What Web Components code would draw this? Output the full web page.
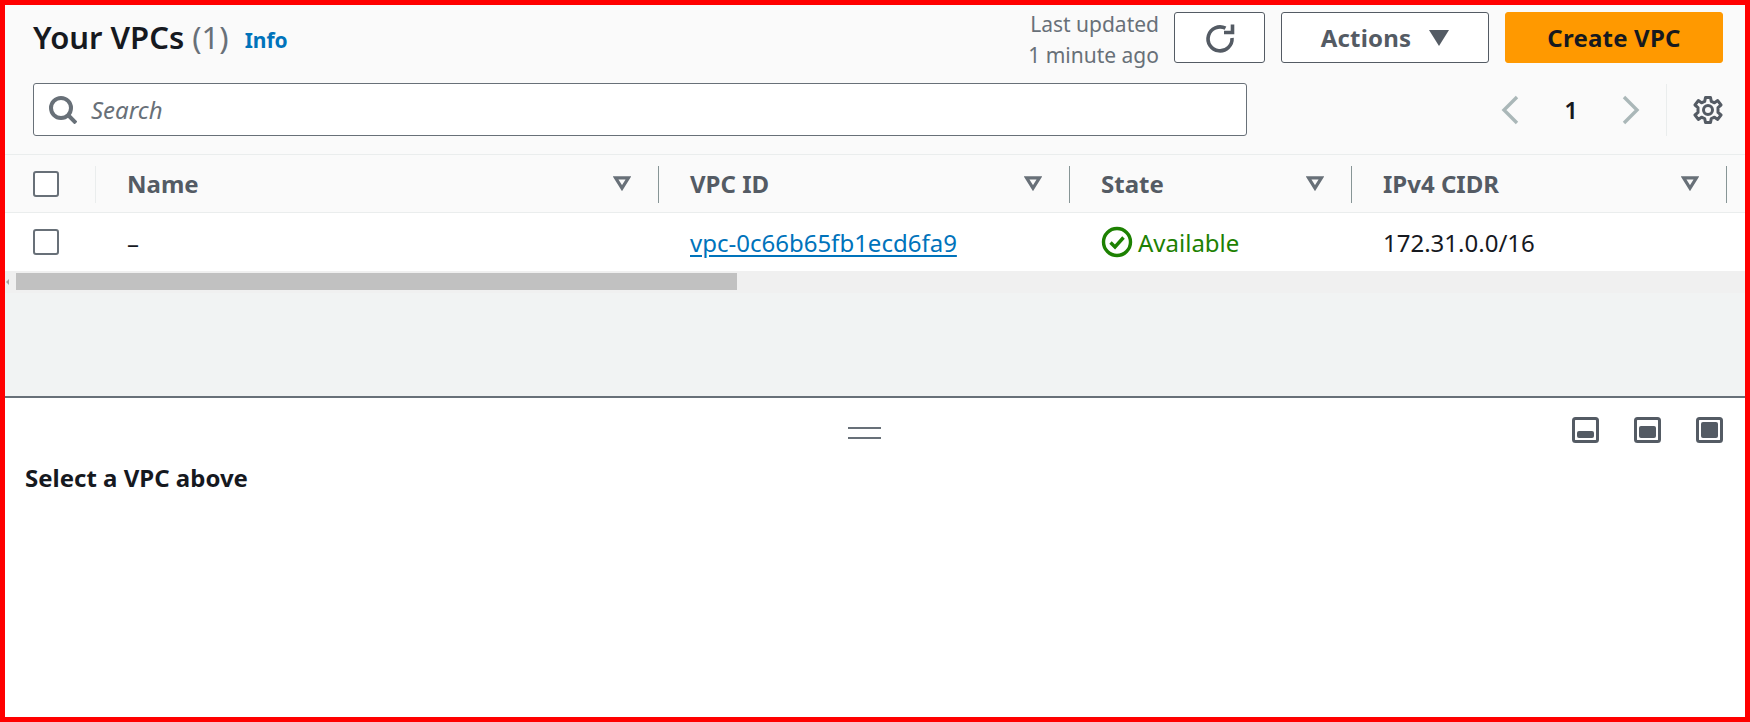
<!DOCTYPE html>
<html lang="en">
<head>
<meta charset="utf-8">
<title>Your VPCs</title>
<style>
  html, body { margin: 0; padding: 0; background: #fff; }
  body { font-family: "Noto Sans", "Open Sans", sans-serif; color: #16191f; }
</style>
</head>
<body>
<vpc-console>
  <vpc-header></vpc-header>
  <vpc-table></vpc-table>
  <vpc-split-panel>Select a VPC above</vpc-split-panel>
</vpc-console>

<script>
class VpcConsole extends HTMLElement {
    constructor() {
        super();
        this.attachShadow({ mode: 'open' });
    }

    connectedCallback() {
        this.shadowRoot.innerHTML = `
            <style>
                :host { display: block; box-sizing: border-box; width: 1750px; height: 722px; border: 5px solid #f00; background: #fff; overflow: hidden; }
                .page { display: flex; flex-direction: column; height: 100%; }
                .gap { height: 103px; background: #f1f3f3; border-bottom: 2px solid #687078; flex: none; }
            </style>
            <div class="page">
                <slot name="none"></slot>
                <slot></slot>
            </div>
        `;
    }
}

class VpcButton extends HTMLElement {
    constructor() {
        super();
        this.attachShadow({ mode: 'open' });
    }

    connectedCallback() {
        this.shadowRoot.innerHTML = `
            <style>
                :host { display: block; }
                button {
                    box-sizing: border-box; height: 51px; width: var(--w, auto); padding: 0;
                    display: flex; align-items: center; justify-content: center; gap: var(--gap, 0);
                    background: #fff; color: #545b64; border: 1px solid #545b64; border-radius: 3px;
                    font: 700 24px/1 "Noto Sans", sans-serif; letter-spacing: 0.2px;
                }
                :host([primary]) button { background: #f90; border-color: #f90; color: #16191f; }
            </style>
            <button type="button"><slot></slot></button>
        `;
    }
}

class VpcHeader extends HTMLElement {
    constructor() {
        super();
        this.attachShadow({ mode: 'open' });
    }

    connectedCallback() {
        this.shadowRoot.innerHTML = `
            <style>
                :host { display: block; box-sizing: border-box; height: 150px; background: #fafafa; border-bottom: 1px solid #eaeded; padding: 7px 22px 0 28px; font-family: "Noto Sans", sans-serif; }
                .top { display: flex; align-items: center; height: 51px; }
                h1 { margin: 0; font-size: 31px; line-height: 51px; font-weight: 600; color: #16191f; white-space: nowrap; }
                h1 span { font-weight: 400; color: #687078; }
                .info { margin-left: 16px; font-size: 21px; font-weight: 700; color: #0073bb; padding-top: 4px; }
                .updated { margin-left: auto; text-align: right; color: #687078; font-size: 21px; line-height: 31px; margin-right: 15px; margin-top: 4px; white-space: nowrap; }
                .actions { display: flex; gap: 16px; align-items: center; }
                .actions svg { display: block; }
                .second { display: flex; align-items: center; margin-top: 20px; height: 53px; }
                .search { box-sizing: border-box; width: 1214px; height: 53px; display: flex; align-items: center; gap: 14px; background: #fff; border: 1px solid #687078; border-radius: 3px; padding-left: 15px; }
                .search span { font-size: 24px; font-style: italic; color: #687078; }
                .pager { margin-left: auto; display: flex; align-items: center; height: 53px; }
                .pager .num { width: 16px; margin: 0 43px 0 44px; text-align: center; font-size: 24px; font-weight: 600; color: #16191f; }
                .pager .div { width: 1px; height: 52px; background: #eaeded; margin: 0 26px 0 26px; }
            </style>
            <div class="top">
                <h1>Your VPCs <span>(1)</span></h1>
                <a class="info">Info</a>
                <div class="updated">Last updated<br>1 minute ago</div>
                <div class="actions">
                    <vpc-button style="--w:91px">
                        <svg width="32" height="32" viewBox="0 0 32 32" fill="none" stroke="#545b64" stroke-width="3.6">
                            <path d="M21.5 6.2A12 12 0 1 0 28 16"/>
                            <path d="M28.5 2.5V10.5H20" stroke-width="3.6"/>
                        </svg>
                    </vpc-button>
                    <vpc-button style="--w:208px;--gap:18px">
                        <span>Actions</span>
                        <svg width="20" height="16" viewBox="0 0 20 16"><path d="M0 0H20L10 16Z" fill="#545b64"/></svg>
                    </vpc-button>
                    <vpc-button primary style="--w:218px">Create VPC</vpc-button>
                </div>
            </div>
            <div class="second">
                <div class="search">
                    <svg width="28" height="28" viewBox="0 0 28 28" fill="none" stroke="#687078" stroke-width="4">
                        <circle cx="12" cy="12" r="10"/>
                        <path d="M19 19L27 27"/>
                    </svg>
                    <span>Search</span>
                </div>
                <div class="pager">
                    <svg width="18" height="30" viewBox="0 0 18 30" fill="none" stroke="#aab7b8" stroke-width="3.4"><path d="M16 2L3 15L16 28"/></svg>
                    <div class="num">1</div>
                    <svg width="18" height="30" viewBox="0 0 18 30" fill="none" stroke="#aab7b8" stroke-width="3.4"><path d="M2 2L15 15L2 28"/></svg>
                    <div class="div"></div>
                    <svg width="30" height="30" viewBox="0 0 30 30" fill="none" stroke="#545b64" stroke-width="3">
                        <circle cx="15" cy="15" r="4.5"/>
                        <path d="M12.5 2.5H17.5L18.3 6.4L21.5 7.8L24.7 5.6L28 10L25 12.6V17.4L28 20L24.7 24.4L21.5 22.2L18.3 23.6L17.5 27.5H12.5L11.7 23.6L8.5 22.2L5.3 24.4L2 20L5 17.4V12.6L2 10L5.3 5.6L8.5 7.8L11.7 6.4Z" stroke-linejoin="round"/>
                    </svg>
                </div>
            </div>
        `;
    }
}

class VpcTable extends HTMLElement {
    constructor() {
        super();
        this.attachShadow({ mode: 'open' });
    }

    filterIcon() {
        return `<svg class="filter" width="18" height="15" viewBox="0 0 18 15" fill="none" stroke="#687078" stroke-width="3.2"><path d="M2.5 1.8H15.5L9 12.2Z"/></svg>`;
    }

    box() {
        return `<span class="check"></span>`;
    }

    connectedCallback() {
        this.shadowRoot.innerHTML = `
            <style>
                :host { display: block; font-family: "Noto Sans", sans-serif; }
                .grid { display: grid; grid-template-columns: 91px 563px 411px 282px 375px 18px; }
                .head { background: #fafafa; height: 58px; border-bottom: 1px solid #eaeded; box-sizing: border-box; }
                .row { background: #fff; height: 58px; box-sizing: border-box; }
                .cell { display: flex; align-items: center; box-sizing: border-box; padding-left: 31px; padding-right: 28px; font-size: 24px; white-space: nowrap; min-width: 0; }
                .head .cell { font-weight: 700; color: #545b64; position: relative; justify-content: space-between; }
                .head .cell::after { content: ""; position: absolute; right: 0; top: 11px; height: 37px; width: 1px; background: #879596; }
                .head .cell:first-child::after { background: #eaeded; }
                .head .cell:last-child::after { display: none; }
                .sel { padding-left: 28px; padding-right: 0; }
                .check { display: block; box-sizing: border-box; width: 26px; height: 26px; border: 2px solid #687078; border-radius: 3px; background: #fff; }
                .filter { flex: none; }
                a { color: #0073bb; text-decoration: underline; text-underline-offset: 3px; }
                .ok { display: flex; align-items: center; gap: 5px; color: #1d8102; }
                .scrollbar { height: 22px; background: #f0f0f0; box-sizing: border-box; padding: 2px 0 3px 11px; position: relative; }
                .thumb { width: 721px; height: 17px; background: #c1c1c1; }
                .arrow { position: absolute; left: 1px; top: 8px; width: 0; height: 0; border: 3px solid transparent; border-right-color: #a3a3a3; border-left: 0; }
                .rule { height: 2px; background: #687078; }
                .gap { height: 103px; background: #f1f3f3; border-bottom: 2px solid #687078; }
            </style>
            <div class="grid head">
                <div class="cell sel">${this.box()}</div>
                <div class="cell">Name${this.filterIcon()}</div>
                <div class="cell">VPC ID${this.filterIcon()}</div>
                <div class="cell">State${this.filterIcon()}</div>
                <div class="cell">IPv4 CIDR${this.filterIcon()}</div>
                <div class="cell"></div>
            </div>
            <div class="grid row">
                <div class="cell sel">${this.box()}</div>
                <div class="cell">–</div>
                <div class="cell"><a>vpc-0c66b65fb1ecd6fa9</a></div>
                <div class="cell"><span class="ok">
                    <svg width="32" height="32" viewBox="0 0 32 32" fill="none" stroke="#1d8102"><circle cx="16" cy="16" r="13.5" stroke-width="3.4"/><path d="M9.5 16.5L14 21L22.5 11.5" stroke-width="3.4"/></svg>
                    Available</span></div>
                <div class="cell">172.31.0.0/16</div>
                <div class="cell"></div>
            </div>
            <div class="scrollbar"><span class="arrow"></span><div class="thumb"></div></div>
            <div class="gap"></div>
        `;
    }
}

class VpcSplitPanel extends HTMLElement {
    constructor() {
        super();
        this.attachShadow({ mode: 'open' });
    }

    panelIcon(fillY, fillH) {
        const inset = fillH > 14 ? 5 : 5;
        return `<svg width="27" height="26" viewBox="0 0 27 26">
            <rect x="1.5" y="1.5" width="24" height="23" rx="2" fill="none" stroke="#545b64" stroke-width="3"/>
            <rect x="${inset}" y="${fillY}" width="17" height="${fillH}" rx="2" fill="#545b64"/>
        </svg>`;
    }

    connectedCallback() {
        this.shadowRoot.innerHTML = `
            <style>
                :host { display: block; flex: 1; background: #fff; font-family: "Noto Sans", sans-serif; }
                .bar { display: grid; grid-template-columns: 1fr auto 1fr; align-items: start; padding: 19px 22px 0 0; height: 45px; box-sizing: content-box; }
                .handle { grid-column: 2; width: 33px; height: 8px; margin-top: 10px; border-top: 2px solid #687078; border-bottom: 2px solid #687078; }
                .icons { grid-column: 3; justify-self: end; display: flex; gap: 35px; }
                svg { display: block; }
                h2 { margin: 0; padding: 0 0 0 20px; font-size: 24px; line-height: 32px; font-weight: 700; color: #16191f; }
            </style>
            <div class="bar">
                <div class="handle"></div>
                <div class="icons">
                    ${this.panelIcon(14, 7)}
                    ${this.panelIcon(9, 12)}
                    ${this.panelIcon(5, 16)}
                </div>
            </div>
            <h2><slot></slot></h2>
        `;
    }
}

customElements.define('vpc-console', VpcConsole);
customElements.define('vpc-button', VpcButton);
customElements.define('vpc-header', VpcHeader);
customElements.define('vpc-table', VpcTable);
customElements.define('vpc-split-panel', VpcSplitPanel);
</script>
</body>
</html>
